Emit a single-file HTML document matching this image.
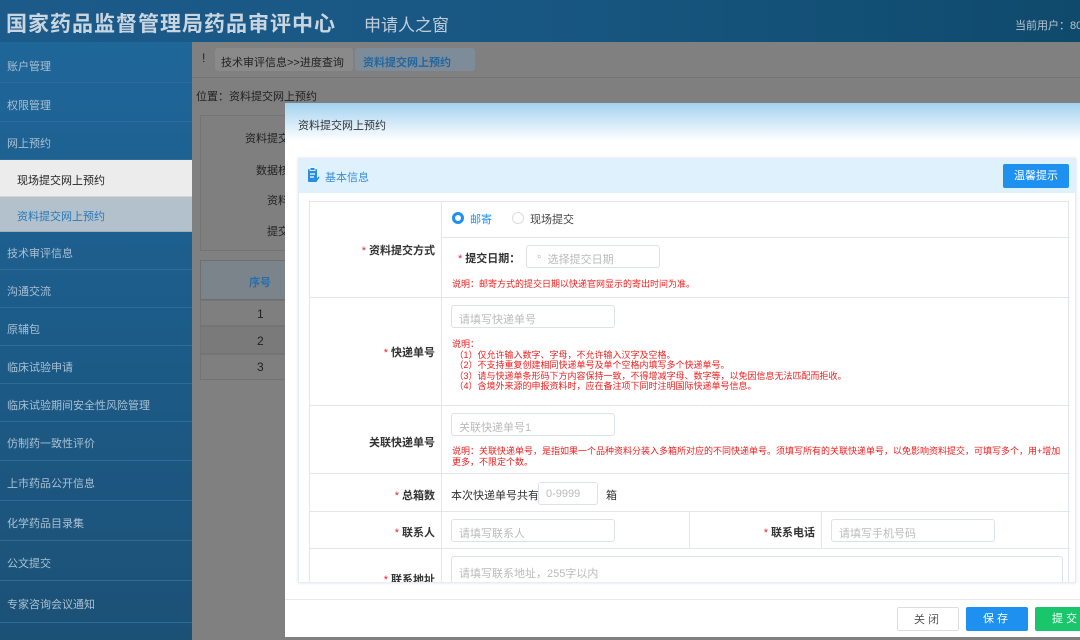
<!DOCTYPE html>
<html><head><meta charset="utf-8"><style>
*{box-sizing:border-box;margin:0;padding:0}
body{width:1080px;height:640px;overflow:hidden;position:relative;font-family:"Liberation Sans","Noto Sans CJK SC",sans-serif;font-size:12px;color:#333;background:#808080}
.hdr{position:absolute;left:0;top:0;width:1080px;height:42px;background:linear-gradient(90deg,#1c5a8a,#185782 50%,#0f4a6c);}
.hdr .t{position:absolute;left:6px;top:8px;font-size:21px;font-weight:bold;color:#c9d6e0;letter-spacing:1px;white-space:nowrap}
.hdr .s{position:absolute;left:364px;top:11px;font-size:17px;color:#c0ccd8;white-space:nowrap}
.hdr .u{position:absolute;left:1015px;top:17px;font-size:11px;color:#b8c4ce;white-space:nowrap}
.side{position:absolute;left:0;top:42px;width:192px;height:598px;background:linear-gradient(180deg,#1f6699,#1c5b88 50%,#1c5176)}
.side div{position:absolute;left:0;width:192px;border-bottom:1px solid #2d6c98;color:#aac0d2;font-size:11px;padding-left:7px;white-space:nowrap}
.main{position:absolute;left:192px;top:42px;width:888px;height:598px;background:#808080}
.tabs{position:absolute;left:0;top:0;width:888px;height:36px;background:#808080;border-bottom:1px solid #767676}
.tab{position:absolute;top:6px;height:23px;border-radius:3px;font-size:11px;padding:6px 8px;white-space:nowrap}
.pos{position:absolute;left:0;top:37px;width:888px;height:26px;font-size:11px;padding:9px 4px;color:#222}
.box{position:absolute;left:8px;top:73px;width:90px;height:136px;border:1px solid #747474;background:#7f7f7f}
.box span{position:absolute;right:0;font-size:11px;color:#222;white-space:nowrap}
.tbl{position:absolute;left:8px;top:218px;width:90px;}
.modal{position:absolute;left:285px;top:103px;width:795px;height:534px;background:#fff}
.mh{height:38px;background:linear-gradient(180deg,#a3d2ef,#fff);font-size:11px;padding:14px 13px;color:#333}
.card{position:absolute;left:13px;top:55px;width:778px;height:425px;border:1px solid #e6eef5;box-shadow:0 0 3px #dde;overflow:hidden}
.ch{height:34px;background:#dff1fd;color:#3a8fd6;font-size:11px;padding:10px 26px;position:relative}
.btnw{position:absolute;right:6px;top:5px;width:66px;height:24px;background:#1e90f0;color:#fff;border-radius:2px;font-size:11px;text-align:center;line-height:24px}
.t2{position:absolute;left:10px;top:42px;width:760px;border:1px solid #e3e6ec}
.r{position:absolute;left:0;width:760px;border-bottom:1px solid #e3e6ec}
.lab{position:absolute;left:0;top:0;width:132px;height:100%;border-right:1px solid #e3e6ec;font-size:11px;font-weight:bold;text-align:right;padding-right:6px;color:#333;white-space:nowrap}
.st{color:#e23;margin-right:3px;font-weight:normal}
.in{position:absolute;height:23px;border:1px solid #dde1e8;border-radius:3px;color:#bbb;font-size:11px;padding:5px 7px;white-space:nowrap}
.red{position:absolute;color:#f01c1c;font-size:9px;line-height:10.5px}
.ft{position:absolute;left:0;top:496px;width:795px;border-top:1px solid #e8e8e8}
.b{position:absolute;top:504px;height:24px;border-radius:2px;font-size:11px;text-align:center;line-height:24px;letter-spacing:3px}
</style></head><body>
<div class="hdr"><div class="t">国家药品监督管理局药品审评中心</div><div class="s">申请人之窗</div><div class="u">当前用户：80</div></div>
<div class="side">
<div style="top:0;height:41px;padding-top:16px">账户管理</div>
<div style="top:41px;height:39px;padding-top:14px">权限管理</div>
<div style="top:80px;height:38px;padding-top:13px">网上预约</div>
<div style="top:118px;height:37px;padding-top:12px;background:#ececec;color:#222;padding-left:17px;border-color:#d5d5d5">现场提交网上预约</div>
<div style="top:155px;height:35px;padding-top:11px;background:#b3c1cd;color:#2a78b8;padding-left:17px;border-color:#a0aebb">资料提交网上预约</div>
<div style="top:190px;height:38px;padding-top:13px">技术审评信息</div>
<div style="top:228px;height:38px;padding-top:13px">沟通交流</div>
<div style="top:266px;height:38px;padding-top:13px">原辅包</div>
<div style="top:304px;height:38px;padding-top:13px">临床试验申请</div>
<div style="top:342px;height:38px;padding-top:13px">临床试验期间安全性风险管理</div>
<div style="top:380px;height:39px;padding-top:13px">仿制药一致性评价</div>
<div style="top:419px;height:40px;padding-top:14px">上市药品公开信息</div>
<div style="top:459px;height:40px;padding-top:14px">化学药品目录集</div>
<div style="top:499px;height:40px;padding-top:14px">公文提交</div>
<div style="top:539px;height:42px;padding-top:15px">专家咨询会议通知</div>
</div>
<div class="main">
<div class="tabs"><span style="position:absolute;left:10px;top:9px;color:#222">!</span>
<div class="tab" style="left:23px;width:138px;background:#8a8a8a;color:#222;padding:6px 6px">技术审评信息&gt;&gt;进度查询</div>
<div class="tab" style="left:163px;width:120px;background:#7d8c98;color:#23679f;font-weight:bold">资料提交网上预约</div></div>
<div class="pos" style="background:#7f7f7f">位置：资料提交网上预约</div>
<div class="box"><span style="top:14px">资料提交</span><span style="top:46px">数据核</span><span style="top:76px">资料</span><span style="top:107px">提交</span></div>
<div class="tbl">
<div style="height:40px;background:#7b838b;border:1px solid #6f6f6f;position:relative"><span style="position:absolute;left:48px;top:13px;color:#2a6ea8;font-weight:bold;font-size:11px">序号</span></div>
<div style="height:26px;background:#7f7f7f;border:1px solid #747474;position:relative"><span style="position:absolute;left:56px;top:6px;color:#222">1</span></div>
<div style="height:28px;background:#7a7a7a;border:1px solid #747474;position:relative"><span style="position:absolute;left:56px;top:7px;color:#222">2</span></div>
<div style="height:26px;background:#7f7f7f;border:1px solid #747474;position:relative"><span style="position:absolute;left:56px;top:5px;color:#222">3</span></div>
</div>
</div>
<div class="modal">
<div class="mh">资料提交网上预约</div>
<div class="card">
<div class="ch"><svg style="position:absolute;left:8px;top:8px" width="13" height="16" viewBox="0 0 13 16"><rect x="1" y="2" width="9" height="13" rx="1" fill="#2a8ee0"/><rect x="3" y="0.5" width="5" height="3" fill="#2a8ee0" stroke="#fff" stroke-width="0.8"/><path d="M3 7h5M3 10h4" stroke="#fff" stroke-width="1.2"/><path d="M9 14l3-4" stroke="#2a8ee0" stroke-width="1.5"/></svg>基本信息<div class="btnw">温馨提示</div></div>
<div class="t2" style="height:400px">
<div class="r" style="top:0;height:96px"><div class="lab" style="padding-top:40px"><span class="st">*</span>资料提交方式</div>
<div style="position:absolute;left:132px;top:0;width:628px;height:36px;border-bottom:1px solid #e3e6ec">
<span style="position:absolute;left:10px;top:10px;width:12px;height:12px;border-radius:50%;border:3.5px solid #1e90f0"></span><span style="position:absolute;left:28px;top:9px;color:#1e90f0;font-size:11px">邮寄</span>
<span style="position:absolute;left:70px;top:10px;width:12px;height:12px;border-radius:50%;border:1px solid #ddd"></span><span style="position:absolute;left:88px;top:9px;font-size:11px;color:#444">现场提交</span></div>
<span style="position:absolute;left:148px;top:48px;font-weight:bold;font-size:11px"><span class="st">*</span>提交日期：</span>
<div class="in" style="left:216px;top:43px;width:134px">&nbsp;°&nbsp; 选择提交日期</div>
<div class="red" style="left:142px;top:77px">说明：邮寄方式的提交日期以快递官网显示的寄出时间为准。</div></div>
<div class="r" style="top:96px;height:108px"><div class="lab" style="padding-top:46px"><span class="st">*</span>快递单号</div>
<div class="in" style="left:141px;top:7px;width:164px">请填写快递单号</div>
<div class="red" style="left:142px;top:41px">说明：<br>&nbsp;（1）仅允许输入数字、字母，不允许输入汉字及空格。<br>&nbsp;（2）不支持重复创建相同快递单号及单个空格内填写多个快递单号。<br>&nbsp;（3）请与快递单条形码下方内容保持一致，不得增减字母、数字等，以免因信息无法匹配而拒收。<br>&nbsp;（4）含境外来源的申报资料时，应在备注项下同时注明国际快递单号信息。</div></div>
<div class="r" style="top:204px;height:68px"><div class="lab" style="padding-top:28px">关联快递单号</div>
<div class="in" style="left:141px;top:7px;width:164px">关联快递单号1</div>
<div class="red" style="left:142px;top:40px;width:612px">说明：关联快递单号，是指如果一个品种资料分装入多箱所对应的不同快递单号。须填写所有的关联快递单号，以免影响资料提交，可填写多个，用+增加更多，不限定个数。</div></div>
<div class="r" style="top:272px;height:38px"><div class="lab" style="padding-top:13px"><span class="st">*</span>总箱数</div>
<span style="position:absolute;left:141px;top:13px;font-size:11px">本次快递单号共有</span>
<div class="in" style="left:228px;top:8px;width:60px">0-9999</div><span style="position:absolute;left:296px;top:13px;font-size:11px">箱</span></div>
<div class="r" style="top:310px;height:37px"><div class="lab" style="padding-top:12px"><span class="st">*</span>联系人</div>
<div class="in" style="left:141px;top:7px;width:164px">请填写联系人</div>
<div style="position:absolute;left:379px;top:0;width:133px;height:36px;border-left:1px solid #e3e6ec;border-right:1px solid #e3e6ec;text-align:right;padding:12px 6px;font-weight:bold;font-size:11px"><span class="st">*</span>联系电话</div>
<div class="in" style="left:521px;top:7px;width:164px">请填写手机号码</div></div>
<div class="r" style="top:347px;height:53px;border:none"><div class="lab" style="padding-top:22px"><span class="st">*</span>联系地址</div>
<div class="in" style="left:141px;top:7px;width:612px;height:50px;padding-top:8px">请填写联系地址，255字以内</div></div>
</div></div>
<div class="ft"></div>
<div class="b" style="left:612px;width:62px;border:1px solid #ddd;color:#555">关闭</div>
<div class="b" style="left:681px;width:62px;background:#1e90f0;color:#fff">保存</div>
<div class="b" style="left:750px;width:62px;background:#19c66b;color:#fff">提交</div>
</div>
</body></html>
